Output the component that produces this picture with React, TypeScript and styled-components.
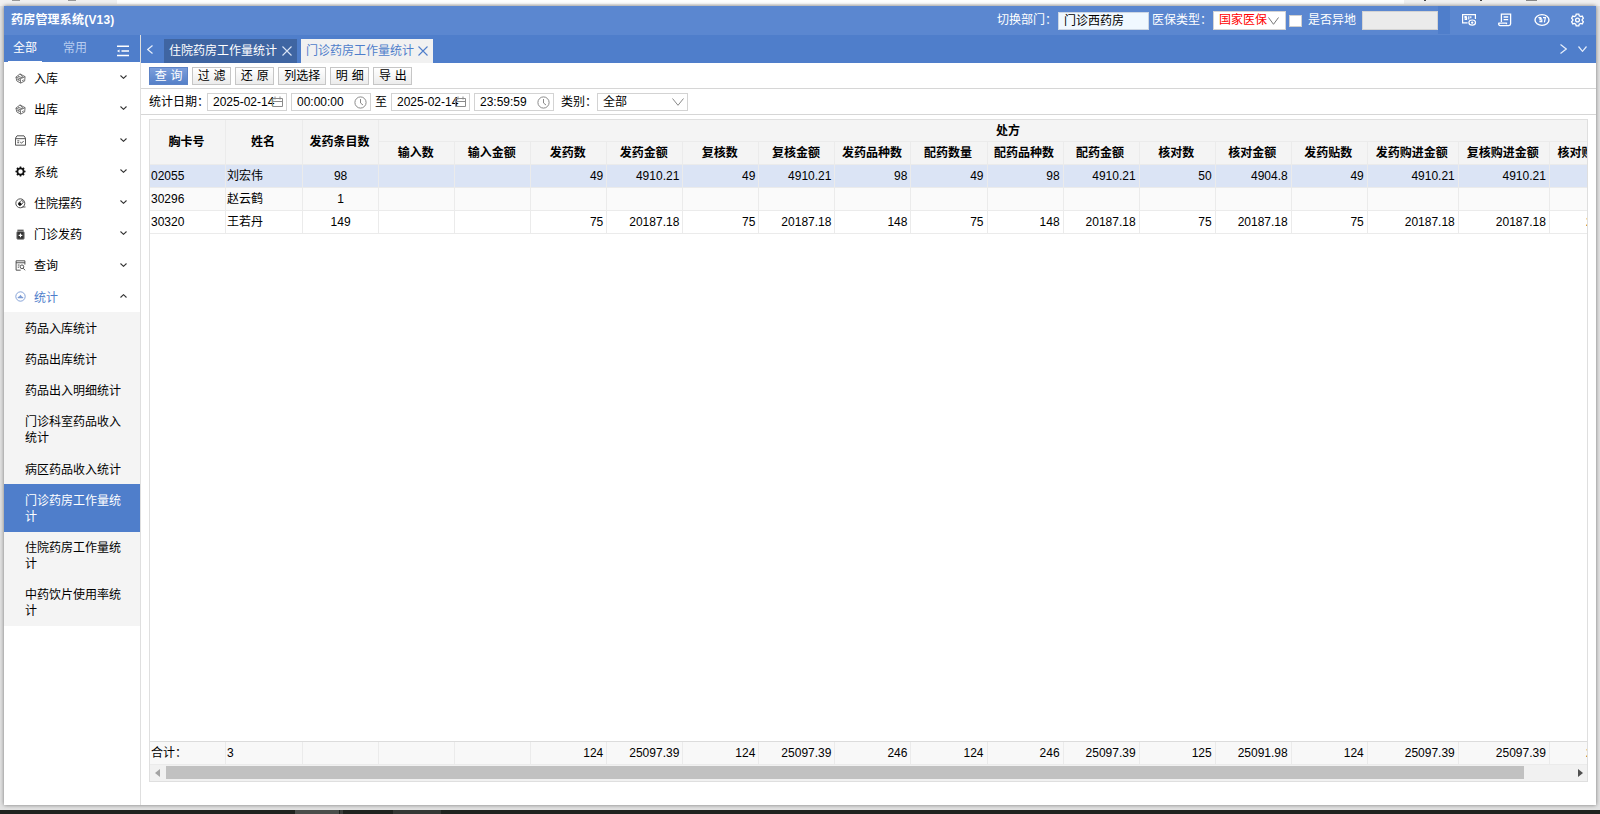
import React from 'react';
import styled, { createGlobalStyle, css } from 'styled-components';

const Global = createGlobalStyle`
  * { box-sizing: border-box; }
  html, body { margin: 0; padding: 0; overflow: hidden; }
  body {
    font-family: "Liberation Sans", "Noto Sans CJK SC", sans-serif;
    font-size: 12px;
    color: #000;
    background: #e3e3e3;
  }
`;

const Desktop = styled.div`
  width: 1600px;
  height: 814px;
  display: flex;
  flex-direction: column;
  background: #e2e2e2;
  overflow: hidden;
`;

const BrowserStrip = styled.div`
  flex: none;
  height: 6px;
  display: flex;
  justify-content: space-between;
  background: #f1f1f1;
`;

const StripSide = styled.div<{ $w: number }>`
  width: ${p => p.$w}px;
  height: 4px;
  display: flex;
  align-items: flex-start;
`;

const StripMid = styled.div`
  flex: 1;
  height: 4px;
  background: #fff;
`;

const Mark = styled.i<{ $ml: number; $w: number; $c: string }>`
  width: ${p => p.$w}px;
  height: 1px;
  margin-left: ${p => p.$ml}px;
  background: ${p => p.$c};
`;

const Frame = styled.div`
  flex: none;
  height: 799px;
  width: 1592px;
  margin-left: 4px;
  display: flex;
  flex-direction: column;
  background: #fff;
  box-shadow: 0 0 4px #777;
`;

const Taskbar = styled.div`
  flex: none;
  margin-top: 5px;
  height: 4px;
  display: flex;
  background: #1f231f;
  position: relative;
`;

const TaskItem = styled.div<{ $ml: number; $w: number; $c: string }>`
  margin-left: ${p => p.$ml}px;
  width: ${p => p.$w}px;
  background: ${p => p.$c};
`;

const Header = styled.header`
  flex: none;
  height: 29px;
  display: flex;
  align-items: center;
  background: #5b87d0;
  color: #fff;
  padding-left: 7px;
`;

const Title = styled.div`
  width: 986px;
  font-weight: bold;
  line-height: 18px;
  padding-bottom: 2px;
  letter-spacing: 0.2px;
`;

const HeadLabel = styled.span<{ $w: number }>`
  width: ${p => p.$w}px;
  line-height: 18px;
  padding-bottom: 2px;
  white-space: nowrap;
`;

const DeptInput = styled.div`
  width: 91px;
  height: 18px;
  margin-right: 3px;
  padding-left: 5px;
  line-height: 17px;
  background: #f0f8ff;
  border: 1px solid #ccd6e4;
  color: #000;
`;

const InsSelect = styled.div`
  width: 73px;
  height: 19px;
  margin: 0 3px 0 1px;
  padding: 0 6px 0 5px;
  display: flex;
  align-items: center;
  justify-content: space-between;
  background: #fff;
  border: 1px solid #d4d4d4;
  color: #f00;
  white-space: nowrap;
  line-height: 17px;
`;

const Check = styled.div`
  width: 13px;
  height: 12px;
  margin-right: 6px;
  background: #fff;
  border: 1px solid #d0d0d0;
`;

const Disabled = styled.div`
  width: 76px;
  height: 19px;
  background: #ebebeb;
  border: 1px solid #d3d3d3;
`;

const HeadGap = styled.div`
  width: 12px;
  height: 28px;
  align-self: flex-start;
  background: #4f7ecb;
`;

const HeadIcons = styled.div`
  flex: 1;
  display: flex;
  align-items: center;
  padding: 0 12px 2px 11px;
  justify-content: space-between;
  svg { display: block; }
`;

const Body = styled.div`
  flex: 1;
  min-height: 0;
  display: flex;
`;

const Sidebar = styled.aside`
  flex: none;
  width: 137px;
  border-right: 1px solid #dfdfdf;
`;

const SideTabs = styled.div`
  height: 27px;
  display: flex;
  background: #4f7ecb;
  padding-left: 4px;
`;

const SideTab = styled.div<{ $active?: boolean }>`
  width: ${p => (p.$active ? 34 : 66)}px;
  text-align: center;
  line-height: 26px;
  color: ${p => (p.$active ? '#fff' : '#b8cdef')};
  border-bottom: ${p => (p.$active ? '1px solid #fff' : 'none')};
`;

const SideCollapse = styled.div`
  margin: 10px 0 0 9px;
  svg { display: block; }
`;

const MenuRow = styled.div<{ $open?: boolean }>`
  height: 31.25px;
  display: flex;
  align-items: center;
  padding: 0 13px 0 11px;
  color: ${p => (p.$open ? '#4f7ecb' : '#000')};
  svg { display: block; flex: none; }
  span { flex: 1; margin-left: 8px; padding-top: 2.4px; line-height: 18px; }
  svg:first-child { margin-top: 1px; }
  svg:last-child { margin-bottom: 1px; }
`;

const SubMenu = styled.div`
  background: #f4f4f4;
`;

const SubItem = styled.div<{ $active?: boolean }>`
  padding: 8.5px 16px 6.75px 21px;
  line-height: 16px;
  color: ${p => (p.$active ? '#fff' : '#000')};
  background: ${p => (p.$active ? '#4f7ecb' : 'transparent')};
`;

const Main = styled.main`
  flex: 1;
  min-width: 0;
  display: flex;
  flex-direction: column;
`;

const TabBar = styled.div`
  flex: none;
  height: 28px;
  display: flex;
  align-items: flex-end;
  background: #4f7ecb;
`;

const NavArrow = styled.div<{ $w: number; $pad?: number }>`
  flex: none;
  width: ${p => p.$w}px;
  height: 28px;
  padding-left: ${p => p.$pad ?? 0}px;
  display: flex;
  align-items: center;
  svg { display: block; }
`;

const PageTab = styled.div<{ $active?: boolean }>`
  width: ${p => (p.$active ? 132 : 133)}px;
  height: 24px;
  margin-right: 4px;
  padding: 0 5px;
  display: flex;
  align-items: center;
  justify-content: space-between;
  line-height: 22px;
  white-space: nowrap;
  color: ${p => (p.$active ? '#4f7ecb' : '#fff')};
  background: ${p => (p.$active ? '#f1f1f1' : '#3f65a2')};
`;

const Spacer = styled.div`
  flex: 1;
`;

const Toolbar = styled.div`
  flex: none;
  height: 26px;
  display: flex;
  align-items: flex-start;
  gap: 3.9px;
  padding: 4px 0 0 8px;
  border-bottom: 1px solid #d6d6d6;
`;

const Button = styled.button<{ $primary?: boolean; $wide?: boolean }>`
  width: ${p => (p.$wide ? 48 : 39.2)}px;
  height: 18px;
  padding: 0;
  font: inherit;
  word-spacing: 0.5px;
  line-height: 15px;
  white-space: nowrap;
  border: 1px solid #c6c6c6;
  color: #000;
  background: linear-gradient(#fff, #ececec);
  ${p => p.$primary && css`
    color: #fff;
    border-color: #5d83c6;
    background: linear-gradient(#7b9edb, #5580c8);
  `}
`;

const Filters = styled.div`
  flex: none;
  height: 26px;
  display: flex;
  align-items: center;
  padding-left: 8px;
  border-bottom: 1px solid #d6d6d6;
`;

const FilterLabel = styled.span<{ $w: number }>`
  width: ${p => p.$w}px;
  line-height: 18px;
  white-space: nowrap;
`;

const Field = styled.div<{ $w?: number; $gap: number }>`
  width: ${p => p.$w ?? 80}px;
  height: 18px;
  margin-right: ${p => p.$gap}px;
  padding: 0 3px 0 5px;
  display: flex;
  align-items: center;
  justify-content: space-between;
  line-height: 16px;
  white-space: nowrap;
  border: 1px solid #d3d3d3;
  background: #fff;
  svg { display: block; flex: none; margin-top: 1px; }
`;

const DateText = styled.span`
  width: 54px;
`;

const Grid = styled.section`
  flex: none;
  width: 1439px;
  height: 663px;
  margin: 4px 0 0 8px;
  display: flex;
  flex-direction: column;
  border: 1px solid #dfdfdf;
  overflow: hidden;
`;

const Table = styled.table`
  flex: none;
  width: 1490px;
  table-layout: fixed;
  border-collapse: separate;
  border-spacing: 0;
`;

const cell = css`
  padding: 0;
  border-right: 1px solid #ebebeb;
  border-bottom: 1px solid #ebebeb;
  white-space: nowrap;
  overflow: hidden;
`;

const Th = styled.th<{ $h: number }>`
  ${cell}
  height: ${p => p.$h}px;
  line-height: 18px;
  padding-right: 2px;
  background: #f4f4f4;
  text-align: center;
`;

const Td = styled.td<{ $align: string }>`
  ${cell}
  height: 23px;
  line-height: 20px;
  text-align: ${p => p.$align};
  padding: 0 ${p => (p.$align === 'right' ? 3 : 1)}px 1px 1px;
`;

const Tr = styled.tr<{ $bg: string }>`
  background: ${p => p.$bg};
`;

const Blank = styled.div`
  flex: 1;
  border-bottom: 1px solid #dcdcdc;
`;

const ScrollBar = styled.div`
  flex: none;
  height: 16px;
  display: flex;
  align-items: center;
  background: #f1f1f1;
  padding: 0 4px 1px 5px;
  svg { display: block; }
`;

const Thumb = styled.div`
  width: 1358px;
  height: 13px;
  margin: 0 auto 0 6px;
  background: #c1c1c1;
`;

const Chevron = ({ dir = 'down', w = 8, h = 5, c = '#333', sw = 1 }: { dir?: string; w?: number; h?: number; c?: string; sw?: number }) => {
  const pts: Record<string, string> = {
    down: `0.5,0.5 ${w / 2},${h - 0.7} ${w - 0.5},0.5`,
    up: `0.5,${h - 0.5} ${w / 2},0.7 ${w - 0.5},${h - 0.5}`,
    left: `${w - 0.5},0.5 0.7,${h / 2} ${w - 0.5},${h - 0.5}`,
    right: `0.5,0.5 ${w - 0.7},${h / 2} 0.5,${h - 0.5}`,
  };
  return (
    <svg width={w} height={h} fill="none" stroke={c} strokeWidth={sw}>
      <polyline points={pts[dir]} />
    </svg>
  );
};

const Close = ({ c }: { c: string }) => (
  <svg width="10" height="10" stroke={c} strokeWidth="1.1">
    <path d="M.5.5l9 9M9.5.5l-9 9" />
  </svg>
);

const Calendar = () => (
  <svg width="11" height="12" fill="none" stroke="#8a8a8a">
    <path d="M.5 2.5h10v8H.5zM.5 5.5h10M3 .5v3M8 .5v3" />
  </svg>
);

const Clock = () => (
  <svg width="13" height="13" fill="none" stroke="#8a8a8a">
    <circle cx="6.5" cy="6.5" r="5.6" />
    <path d="M6.5 3v4l2.5 2" />
  </svg>
);

const box = { width: 11, height: 11, viewBox: '0 0 12 12', fill: 'none', stroke: '#444', strokeWidth: 1 };

const menuIcons: Record<string, React.ReactNode> = {
  store: (
    <svg {...box} stroke="#666">
      <path d="M1 4.5L5.5 1 11 4M1 4.5l1 4.2L6.2 11l4.3-2.2L11 4M1 4.5l4.7 1.7L11 4M5.7 6.2L6.2 11M3.2 3.4l4.8 2M5.5 1l3.3 3.8M3.2 7.2l1.4.7M7.8 8.4l1.8-.8M2.3 6.5l3 1.6" />
    </svg>
  ),
  stock: (
    <svg {...box}>
      <path d="M2.2.9h7.6l1.7 2.6v7.6H.5V3.5zM.5 4h11M2.5 6.4h2.2M2.5 8.4h2M5.7 7.7l1.4 1.2 2.4-2.4" />
    </svg>
  ),
  gear: (
    <svg {...box} stroke="#111">
      <circle cx="6" cy="6" r="3.4" strokeWidth="1.9" />
      <path d="M6 .5v2M6 9.5v2M.5 6h2M9.5 6h2M2.1 2.1l1.4 1.4M8.5 8.5l1.4 1.4M9.9 2.1L8.5 3.5M3.5 8.5L2.1 9.9" strokeWidth="1.7" />
    </svg>
  ),
  pill: (
    <svg {...box}>
      <circle cx="5.8" cy="5.8" r="4.9" />
      <path d="M4.2 7.6a1.6 1.6 0 010-2.3l2-2a1.6 1.6 0 012.3 2.3l-2 2a1.6 1.6 0 01-2.3 0zM8 9.8h3.5" />
      <path d="M4.2 7.6a1.6 1.6 0 010-2.3L5.3 4.3l2.2 2.3-1 1a1.6 1.6 0 01-2.3 0z" fill="#111" stroke="none" />
    </svg>
  ),
  bottle: (
    <svg {...box}>
      <path d="M2.6 1.4h6.8" stroke="#555" strokeWidth="1.4" />
      <rect x="2" y="2.8" width="8" height="8.4" rx="1" fill="#333" stroke="#888" />
      <path d="M6 5v4M4 7h4" stroke="#fff" strokeWidth="1.2" />
    </svg>
  ),
  search: (
    <svg {...box}>
      <path d="M10.8 5V.9H1.2v10.2h5M1.2 3h9.6M3 5.5h2M3 7.8h1.4" />
      <circle cx="7.6" cy="7.4" r="2" />
      <path d="M9 9l2 2.2" />
    </svg>
  ),
  stat: (
    <svg {...box} stroke="#7c9bd4">
      <circle cx="6" cy="6" r="5.1" />
      <path d="M3 8V6.5L4.5 6 6 4.2 7.4 6 9 6.7V8z" fill="#7c9bd4" stroke="none" />
    </svg>
  ),
};

const menu: [string, string][] = [
  ['store', '入库'],
  ['store', '出库'],
  ['stock', '库存'],
  ['gear', '系统'],
  ['pill', '住院摆药'],
  ['bottle', '门诊发药'],
  ['search', '查询'],
];

const subMenu = [
  '药品入库统计',
  '药品出库统计',
  '药品出入明细统计',
  '门诊科室药品收入统计',
  '病区药品收入统计',
  '门诊药房工作量统计',
  '住院药房工作量统计',
  '中药饮片使用率统计',
];

const columns = [
  '输入数', '输入金额', '发药数', '发药金额', '复核数', '复核金额', '发药品种数', '配药数量',
  '配药品种数', '配药金额', '核对数', '核对金额', '发药贴数', '发药购进金额', '复核购进金额', '核对购进金额',
];

const widths = [76, 77, 76, ...Array(13).fill(76), 91, 91, 90];

const rows = [
  ['02055', '刘宏伟', '98', '', '', '49', '4910.21', '49', '4910.21', '98', '49', '98', '4910.21', '50', '4904.8', '49', '4910.21', '4910.21', '4904.8'],
  ['30296', '赵云鹤', '1', ...Array(16).fill('')],
  ['30320', '王若丹', '149', '', '', '75', '20187.18', '75', '20187.18', '148', '75', '148', '20187.18', '75', '20187.18', '75', '20187.18', '20187.18', '20187.18'],
];
const rowColors = ['#dbe4f5', '#fafafa', '#fff'];

const totals = ['合计：', '3', '', '', '', '124', '25097.39', '124', '25097.39', '246', '124', '246', '25097.39', '125', '25091.98', '124', '25097.39', '25097.39', '25091.98'];

const alignOf = (i: number) => (i < 2 ? 'left' : i === 2 ? 'center' : 'right');

const Cols = () => (
  <colgroup>
    {widths.map((w, i) => <col key={i} width={w} />)}
  </colgroup>
);

const DataRow = ({ data, bg }: { data: string[]; bg: string }) => (
  <Tr $bg={bg}>
    {data.map((t, i) => <Td key={i} $align={alignOf(i)}>{t}</Td>)}
  </Tr>
);

export default function App() {
  return (
    <Desktop>
      <Global />
      <BrowserStrip>
        <StripSide $w={117}>
          <Mark $ml={12} $w={8} $c="#999" />
          <Mark $ml={48} $w={8} $c="#999" />
        </StripSide>
        <StripMid />
        <StripSide $w={196}>
          <Mark $ml={20} $w={2} $c="#444" />
          <Mark $ml={54} $w={2} $c="#444" />
          <Mark $ml={44} $w={11} $c="#888" />
        </StripSide>
      </BrowserStrip>
      <Frame>
        <Header>
          <Title>药房管理系统(V13)</Title>
          <HeadLabel $w={61}>切换部门：</HeadLabel>
          <DeptInput>门诊西药房</DeptInput>
          <HeadLabel $w={60}>医保类型：</HeadLabel>
          <InsSelect>国家医保<Chevron w={11} h={8} c="#777" /></InsSelect>
          <Check />
          <HeadLabel $w={54}>是否异地</HeadLabel>
          <Disabled />
          <HeadGap />
          <HeadIcons>
            <svg width="16" height="14" fill="none" stroke="#fff" strokeWidth="1.2">
              <path d="M14.4 6V1.6H1.6v8.2h5M5.8 3.6H4v1.3h1.6v1.4H3.600M7.800 3.200v3.200M9.800 3.200v2" />
              <ellipse cx="11.2" cy="9.6" rx="3.3" ry="2.6" />
              <circle cx="11.2" cy="9.6" r=".6" />
            </svg>
            <svg width="14" height="14" fill="none" stroke="#fff" strokeWidth="1.3">
              <path d="M3.4 9V1.2h9.2v9.6a1.8 1.8 0 01-1.8 1.8H2.4A1.6 1.6 0 01.9 10.2h7.6v1M5.6 4h4.6M5.6 6.6h4.6" />
            </svg>
            <svg width="16" height="14" fill="none" stroke="#fff" strokeWidth="1.4">
              <ellipse cx="8" cy="7" rx="7" ry="5.4" />
              <path d="M4.4 4.6h2.800M7.800 5.400H6v1.500h1.800v1.700H5.400M9 4.600h2.400L10.400 9.400" strokeWidth="1.2" />
            </svg>
            <svg width="13" height="14" viewBox="0 0 13 14" fill="none" stroke="#fff" strokeWidth="1.3">
              <path d="M5.2 1.2h2.6l.5 1.7 1.3.7 1.6-.5 1.2 2.2-1.2 1.2v1l1.2 1.2-1.2 2.2-1.6-.5-1.3.7-.5 1.7H5.2l-.5-1.7-1.3-.7-1.6.5L.6 8.7l1.2-1.2v-1L.6 5.3l1.2-2.2 1.6.5 1.3-.7z" />
              <circle cx="6.5" cy="7" r="1.9" />
            </svg>
          </HeadIcons>
        </Header>
        <Body>
          <Sidebar>
            <SideTabs>
              <SideTab $active>全部</SideTab>
              <SideTab>常用</SideTab>
              <SideCollapse>
                <svg width="12" height="12" stroke="#fff" strokeWidth="1.6" fill="#fff">
                  <path d="M0 1.2h12M4.5 6H12M0 10.5h12" />
                  <path d="M0 6l2.5-1.6v3.2z" stroke="none" />
                </svg>
              </SideCollapse>
            </SideTabs>
            {menu.map(([icon, name]) => (
              <MenuRow key={name}>
                {menuIcons[icon]}
                <span>{name}</span>
                <Chevron w={7} h={4} sw={1.1} />
              </MenuRow>
            ))}
            <MenuRow $open>
              {menuIcons.stat}
              <span>统计</span>
              <Chevron dir="up" w={7} h={4} sw={1.1} />
            </MenuRow>
            <SubMenu>
              {subMenu.map(name => (
                <SubItem key={name} $active={name === '门诊药房工作量统计'}>{name}</SubItem>
              ))}
            </SubMenu>
          </Sidebar>
          <Main>
            <TabBar>
              <NavArrow $w={23} $pad={6}><Chevron dir="left" w={6} h={9} c="#e6eefb" sw={1.2} /></NavArrow>
              <PageTab>住院药房工作量统计<Close c="#dbe5f6" /></PageTab>
              <PageTab $active>门诊药房工作量统计<Close c="#4f7ecb" /></PageTab>
              <Spacer />
              <NavArrow $w={18}><Chevron dir="right" w={7} h={10} c="#e6eefb" sw={1.2} /></NavArrow>
              <NavArrow $w={18}><Chevron w={9} h={6} c="#e6eefb" sw={1.2} /></NavArrow>
            </TabBar>
            <Toolbar>
              <Button $primary>查 询</Button>
              <Button>过 滤</Button>
              <Button>还 原</Button>
              <Button $wide>列选择</Button>
              <Button>明 细</Button>
              <Button>导 出</Button>
            </Toolbar>
            <Filters>
              <FilterLabel $w={58}>统计日期：</FilterLabel>
              <Field $gap={4}><DateText>2025-02-14</DateText><Calendar /></Field>
              <Field $gap={4}>00:00:00<Clock /></Field>
              <FilterLabel $w={16}>至</FilterLabel>
              <Field $w={79} $gap={4}><DateText>2025-02-14</DateText><Calendar /></Field>
              <Field $gap={7}>23:59:59<Clock /></Field>
              <FilterLabel $w={36}>类别：</FilterLabel>
              <Field $w={91} $gap={0}>全部<Chevron w={12} h={8} c="#888" /></Field>
            </Filters>
            <Grid>
              <Table>
                <Cols />
                <thead>
                  <tr>
                    <Th $h={45} rowSpan={2}>胸卡号</Th>
                    <Th $h={45} rowSpan={2}>姓名</Th>
                    <Th $h={45} rowSpan={2}>发药条目数</Th>
                    <Th $h={22} colSpan={16}>处方</Th>
                  </tr>
                  <tr>
                    {columns.map(c => <Th $h={23} key={c}>{c}</Th>)}
                  </tr>
                </thead>
                <tbody>
                  {rows.map((r, i) => <DataRow key={r[0]} data={r} bg={rowColors[i]} />)}
                </tbody>
              </Table>
              <Blank />
              <Table>
                <Cols />
                <tbody>
                  <DataRow data={totals} bg="#f8f8f8" />
                </tbody>
              </Table>
              <ScrollBar>
                <svg width="5" height="8"><path d="M5 0v8L0 4z" fill="#a3a3a3" /></svg>
                <Thumb />
                <svg width="5" height="8"><path d="M0 0v8l5-4z" fill="#505050" /></svg>
              </ScrollBar>
            </Grid>
          </Main>
        </Body>
      </Frame>
      <Taskbar>
        <TaskItem $ml={295} $w={44} $c="#4b4e4b" />
        <TaskItem $ml={1} $w={3} $c="#3b3e3b" />
        <TaskItem $ml={50} $w={48} $c="#353835" />
      </Taskbar>
    </Desktop>
  );
}
